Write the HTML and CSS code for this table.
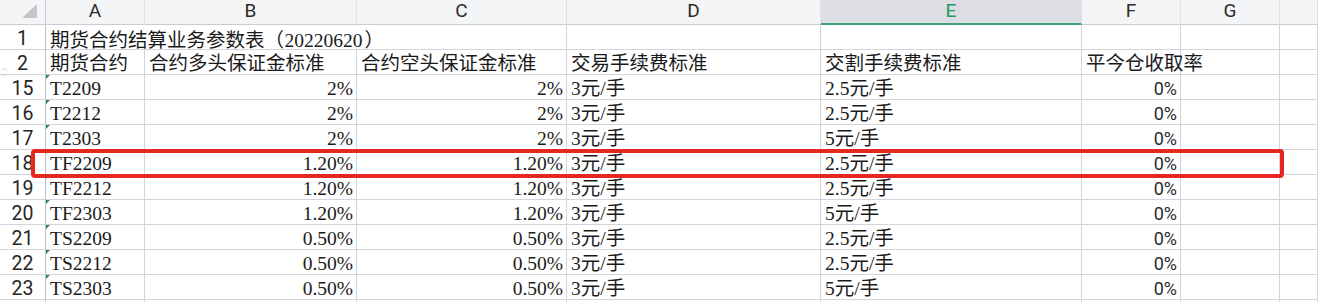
FILE: index.html
```html
<!DOCTYPE html>
<html lang="zh-CN">
<head>
<meta charset="utf-8">
<title>期货合约结算业务参数表</title>
<link rel="stylesheet" href="styles.css">
</head>
<body>
<div class="wrap">
  <div class="sheet">
    <div class="corner"><svg width="15" height="14" viewBox="0 0 15 14"><polygon points="0,14 15,14 15,0" fill="#c4c5c9"/></svg></div>
    <div class="ch">A</div><div class="ch">B</div><div class="ch">C</div><div class="ch">D</div><div class="ch active">E</div><div class="ch">F</div><div class="ch">G</div><div class="ch"></div>

    <div class="rh">1</div><div class="c title">期货合约结算业务参数表<span class="po">（</span>20220620<span class="pc">）</span></div><div class="c"></div><div class="c"></div><div class="c"></div><div class="c"></div><div class="c"></div>
    <div class="rh">2</div><div class="c">期货合约</div><div class="c">合约多头保证金标准</div><div class="c">合约空头保证金标准</div><div class="c">交易手续费标准</div><div class="c">交割手续费标准</div><div class="c">平今仓收取率</div><div class="c"></div><div class="c"></div>

    <div class="rh">15</div><div class="c t">T2209</div><div class="c r">2%</div><div class="c r">2%</div><div class="c">3元/手</div><div class="c">2.5元/手</div><div class="c r s">0%</div><div class="c"></div><div class="c"></div>
    <div class="rh">16</div><div class="c t">T2212</div><div class="c r">2%</div><div class="c r">2%</div><div class="c">3元/手</div><div class="c">2.5元/手</div><div class="c r s">0%</div><div class="c"></div><div class="c"></div>
    <div class="rh">17</div><div class="c t">T2303</div><div class="c r">2%</div><div class="c r">2%</div><div class="c">3元/手</div><div class="c">5元/手</div><div class="c r s">0%</div><div class="c"></div><div class="c"></div>
    <div class="rh">18</div><div class="c t">TF2209</div><div class="c r">1.20%</div><div class="c r">1.20%</div><div class="c">3元/手</div><div class="c">2.5元/手</div><div class="c r s">0%</div><div class="c"></div><div class="c"></div>
    <div class="rh">19</div><div class="c t">TF2212</div><div class="c r">1.20%</div><div class="c r">1.20%</div><div class="c">3元/手</div><div class="c">2.5元/手</div><div class="c r s">0%</div><div class="c"></div><div class="c"></div>
    <div class="rh">20</div><div class="c t">TF2303</div><div class="c r">1.20%</div><div class="c r">1.20%</div><div class="c">3元/手</div><div class="c">5元/手</div><div class="c r s">0%</div><div class="c"></div><div class="c"></div>
    <div class="rh">21</div><div class="c t">TS2209</div><div class="c r">0.50%</div><div class="c r">0.50%</div><div class="c">3元/手</div><div class="c">2.5元/手</div><div class="c r s">0%</div><div class="c"></div><div class="c"></div>
    <div class="rh">22</div><div class="c t">TS2212</div><div class="c r">0.50%</div><div class="c r">0.50%</div><div class="c">3元/手</div><div class="c">2.5元/手</div><div class="c r s">0%</div><div class="c"></div><div class="c"></div>
    <div class="rh">23</div><div class="c t">TS2303</div><div class="c r">0.50%</div><div class="c r">0.50%</div><div class="c">3元/手</div><div class="c">5元/手</div><div class="c r s">0%</div><div class="c"></div><div class="c"></div>
    <div class="rh"></div><div class="c"></div><div class="c"></div><div class="c"></div><div class="c"></div><div class="c"></div><div class="c"></div><div class="c"></div><div class="c"></div>
  </div>
  <svg class="resize" width="7" height="10" viewBox="0 0 7 10"><path d="M1 3.5 L3.5 1 L6 3.5 M1 6.5 L3.5 9 L6 6.5" fill="none" stroke="#c9cacd" stroke-width="1"/></svg>
  <div class="highlight"></div>
</div>
</body>
</html>
```
FILE: styles.css
```css
html, body {
  margin: 0;
  padding: 0;
  background: #ffffff;
}
.wrap {
  position: relative;
  width: 1318px;
  height: 302px;
  overflow: hidden;
}
.sheet {
  display: grid;
  grid-template-columns: 46px 99px 212px 210px 254px 261px 99px 99px 1fr;
  grid-auto-rows: 25px;
  font-family: "Liberation Serif", "Noto Sans CJK SC", serif;
  font-size: 19.5px;
  color: #1a1a1a;
}
.corner {
  background: #f4f5f7;
  border-right: 1px solid #c9cad3;
  border-bottom: 1px solid #c9cad3;
  box-sizing: border-box;
  display: flex;
  justify-content: flex-end;
  align-items: flex-end;
  padding: 0 8px 6px 0;
}
.ch {
  background: #f4f5f7;
  border-right: 1px solid #e1e2e7;
  border-bottom: 1px solid #c9cad3;
  box-sizing: border-box;
  text-align: center;
  font-family: Roboto, "Noto Sans", sans-serif;
  font-size: 19px;
  line-height: 22px;
  color: #2b2b2b;
}
.ch.active {
  background: #dcdee3;
  color: #1f9a62;
  border-bottom: 2px solid #3fa277;
}
.rh {
  background: #ffffff;
  border-right: 1px solid #bfc0cb;
  border-bottom: 1px solid #d3d4de;
  box-sizing: border-box;
  text-align: center;
  font-family: Roboto, "Noto Sans", sans-serif;
  font-size: 19.5px;
  line-height: 21px;
  padding-top: 3px;
  color: #262626;
}
.c {
  position: relative;
  border-right: 1px solid #d3d4de;
  border-bottom: 1px solid #d3d4de;
  box-sizing: border-box;
  padding: 3px 3px 0 4px;
  line-height: 21px;
  white-space: nowrap;
  overflow: visible;
}
.c.title {
  grid-column: span 3;
}
.po, .pc {
  display: inline-block;
  width: 20px;
  font-family: "Noto Sans CJK SC", sans-serif;
}
.po {
  text-align: right;
  padding-right: 3px;
  box-sizing: border-box;
}
.pc {
  text-align: left;
  padding-left: 2px;
  box-sizing: border-box;
}
.c.r {
  text-align: right;
  padding-right: 3px;
}
.c.s {
  font-family: Roboto, "Noto Sans", sans-serif;
  font-size: 18px;
  color: #2b2b2b;
}
.c.t::before {
  content: "";
  position: absolute;
  left: 0;
  top: 0;
  border-top: 4px solid #2d8a3f;
  border-right: 4px solid transparent;
}
.resize {
  position: absolute;
  left: 1px;
  top: 67px;
}
.highlight {
  position: absolute;
  left: 31px;
  top: 149px;
  width: 1253px;
  height: 29px;
  box-sizing: border-box;
  border: 4px solid #e5281f;
  border-radius: 4px;
}
```
